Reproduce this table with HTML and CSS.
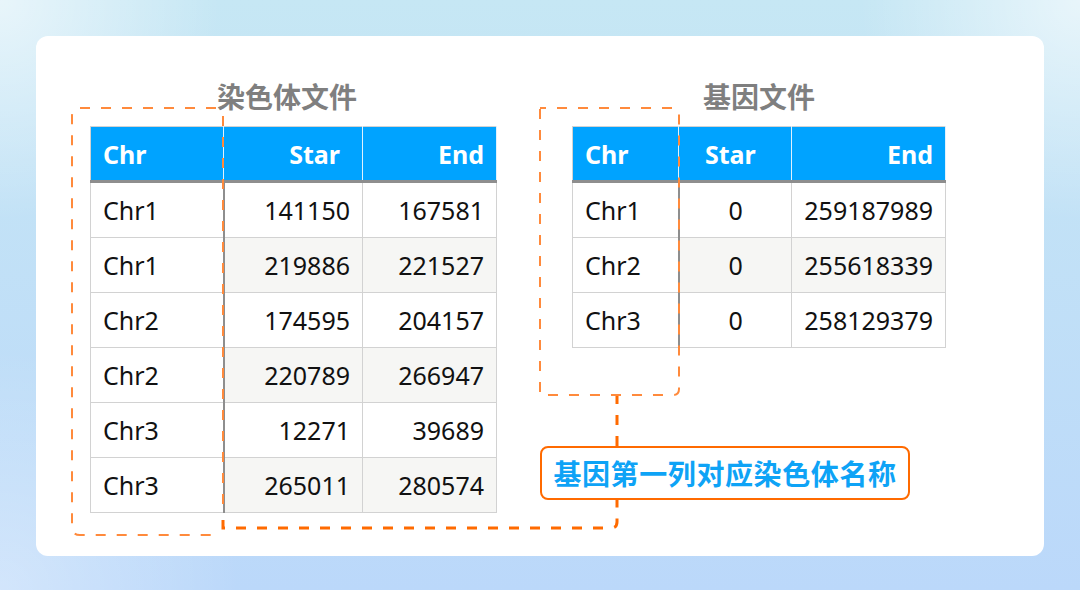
FILE: index.html
```html
<!DOCTYPE html>
<html lang="zh-CN">
<head>
    <meta charset="UTF-8">
    <meta name="viewport" content="width=device-width, initial-scale=1.0">
    <title>染色体与基因文件</title>
    <link rel="stylesheet" href="styles.css">
</head>
<body>
    <div class="card">
        <div class="panels">
            <div class="panel panel-chrom">
                <h2 class="panel-title title-chrom">染色体文件</h2>
                <table class="data-table chrom-table">
                    <thead>
                        <tr>
                            <th class="col-chr">Chr</th>
                            <th class="num th-star">Star</th>
                            <th class="num">End</th>
                        </tr>
                    </thead>
                    <tbody>
                        <tr><td>Chr1</td><td class="num">141150</td><td class="num">167581</td></tr>
                        <tr><td>Chr1</td><td class="num">219886</td><td class="num">221527</td></tr>
                        <tr><td>Chr2</td><td class="num">174595</td><td class="num">204157</td></tr>
                        <tr><td>Chr2</td><td class="num">220789</td><td class="num">266947</td></tr>
                        <tr><td>Chr3</td><td class="num">12271</td><td class="num">39689</td></tr>
                        <tr><td>Chr3</td><td class="num">265011</td><td class="num">280574</td></tr>
                    </tbody>
                </table>
            </div>
            <div class="panel panel-gene">
                <h2 class="panel-title">基因文件</h2>
                <table class="data-table gene-table">
                    <thead>
                        <tr>
                            <th class="col-chr">Chr</th>
                            <th class="mid th-mid">Star</th>
                            <th class="num">End</th>
                        </tr>
                    </thead>
                    <tbody>
                        <tr><td>Chr1</td><td class="mid">0</td><td class="num">259187989</td></tr>
                        <tr><td>Chr2</td><td class="mid">0</td><td class="num">255618339</td></tr>
                        <tr><td>Chr3</td><td class="mid">0</td><td class="num">258129379</td></tr>
                    </tbody>
                </table>
            </div>
        </div>

        <!-- dashed annotation lines, card coordinates -->
        <svg class="marks" width="1008" height="520" viewBox="0 0 1008 520">
            <g fill="none" stroke="#ff8a3c" stroke-width="2" stroke-dasharray="10 11">
                <path d="M180 72 H44 Q36 72 36 80 V491 Q36 499 44 499 H180"/>
                <path d="M187 80 V478"/>
                <path d="M504 72 H637 Q643 72 643 78 V353 Q643 359 637 359 H504 Z" stroke-dashoffset="4"/>
            </g>
            <g fill="none" stroke="#ff6a00" stroke-width="3" stroke-dasharray="10 11">
                <path d="M187 484 V492 H575 Q581 492 581 486 V464"/>
                <path d="M581 410 V360"/>
            </g>
        </svg>

        <div class="callout">基因第一列对应染色体名称</div>
    </div>
</body>
</html>
```

FILE: styles.css
```css
html, body {
    margin: 0;
    height: 590px;
    overflow: hidden;
}
body {
    font-family: "Noto Sans", "Noto Sans CJK SC", sans-serif;
    background:
        radial-gradient(circle at 0 0, rgba(255, 255, 255, 0.6), rgba(255, 255, 255, 0) 220px),
        radial-gradient(circle at 100% 0, rgba(255, 255, 255, 0.6), rgba(255, 255, 255, 0) 220px),
        radial-gradient(circle at 0 100%, rgba(255, 255, 255, 0.35), rgba(255, 255, 255, 0) 240px),
        linear-gradient(#c6e7f4, #bbd8fa);
    padding: 36px;
    box-sizing: border-box;
}
.card {
    position: relative;
    width: 1008px;
    height: 520px;
    background-color: #fff;
    border-radius: 12px;
    box-sizing: border-box;
    padding: 43px 0 0 54px;
}
.panels {
    display: flex;
    gap: 75px;
}
.panel {
    display: flex;
    flex-direction: column;
    align-items: center;
}
.panel-title {
    margin: 0 0 13px 0;
    font-family: "Noto Sans CJK SC", sans-serif;
    font-size: 28px;
    line-height: 34px;
    font-weight: 700;
    color: #7f7f7f;
}
.title-chrom {
    margin-right: 13px;
}
.data-table {
    border-collapse: collapse;
    font-size: 25px;
    color: #111;
    border: 1px solid #d2d2d2;
}
.data-table th {
    background-color: #00a3ff;
    color: #fff;
    font-weight: 700;
    height: 53px;
    padding: 0 12px;
    text-align: left;
    border-right: 1px solid #dff1ff;
    border-bottom: 3px solid #8e8e8e;
}
.data-table td {
    height: 54px;
    padding: 0 12px;
    border: 1px solid #d2d2d2;
}
.data-table td:first-child {
    border-right: 2px solid #8e8e8e;
}
.data-table tbody tr:nth-child(even) td:not(:first-child) {
    background-color: #f6f6f4;
}
.data-table .num {
    text-align: right;
}
.data-table .mid {
    text-align: center;
}
.data-table th.th-star {
    padding-right: 22px;
}
.data-table th.th-mid {
    padding-right: 22px;
}
.chrom-table {
    width: 407px;
}
.chrom-table th:nth-child(1) { width: 108px; }
.chrom-table th:nth-child(2) { width: 104px; }
.gene-table {
    width: 374px;
}
.gene-table th:nth-child(1) { width: 84px; }
.gene-table th:nth-child(2) { width: 81px; }
.marks {
    position: absolute;
    left: 0;
    top: 0;
    pointer-events: none;
}
.callout {
    position: absolute;
    left: 504px;
    top: 410px;
    width: 370px;
    height: 54px;
    box-sizing: border-box;
    border: 2px solid #ff6a00;
    border-radius: 8px;
    background-color: #fff;
    font-family: "Noto Sans CJK SC", sans-serif;
    font-size: 28px;
    font-weight: 700;
    line-height: 50px;
    letter-spacing: 0.6px;
    color: #0ea3f6;
    text-align: center;
}
```
